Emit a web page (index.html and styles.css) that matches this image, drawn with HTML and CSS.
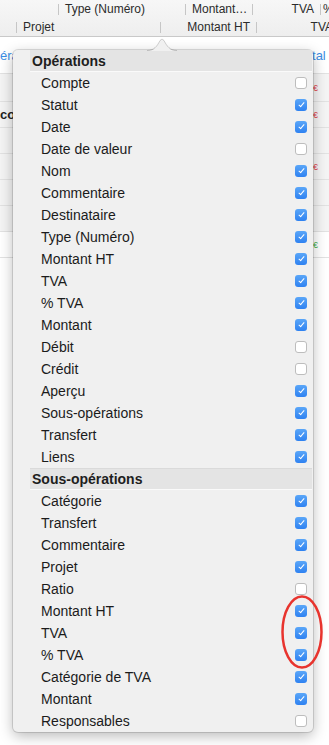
FILE: index.html
```html
<!DOCTYPE html>
<html lang="fr">
<head>
    <meta charset="UTF-8">
    <meta name="viewport" content="width=device-width, initial-scale=1.0">
    <title>Colonnes</title>
    <link rel="stylesheet" href="styles.css">
</head>
<body>
    <!-- Table behind the popover -->
    <div class="table-head">
        <div class="head-row">
            <div class="cell" style="width: 58px"></div>
            <span class="sep"></span>
            <div class="cell" style="width: 126px">Type (Numéro)</div>
            <span class="sep"></span>
            <div class="cell" style="width: 66px">Montant…</div>
            <span class="sep"></span>
            <div class="cell right" style="width: 67px">TVA</div>
            <span class="sep"></span>
            <div class="cell tight">%</div>
        </div>
        <div class="head-row">
            <div class="cell" style="width: 16px"></div>
            <span class="sep"></span>
            <div class="cell" style="width: 143px">Projet</div>
            <span class="sep"></span>
            <div class="cell right" style="width: 95px">Montant HT</div>
            <span class="sep"></span>
            <div class="cell right" style="width: 82px">TVA</div>
        </div>
    </div>

    <div class="summary">
        <span>éra</span>
        <span class="summary-right">tal :</span>
    </div>

    <div class="rows">
        <div class="row gray first"><span></span><span class="mark red">€</span></div>
        <div class="row gray"><span class="bold">co</span><span class="mark red">€</span></div>
        <div class="row gray"><span></span><span></span></div>
        <div class="row gray"><span></span><span class="mark red">€</span></div>
        <div class="row gray"><span></span><span></span></div>
        <div class="row gray"><span></span><span></span></div>
        <div class="row"><span></span><span class="mark green">€</span></div>
    </div>

    <!-- Column chooser popover -->
    <div class="popover">
        <svg class="arrow" width="30" height="13" viewBox="0 0 30 13">
            <path d="M0 13 C7 13 10 9 13 3 Q15 0 17 3 C20 9 23 13 30 13 Z" fill="#f0f0f0"/>
            <path d="M0 12.5 C7 12.5 10 8.5 13 2.5 Q15 -0.5 17 2.5 C20 8.5 23 12.5 30 12.5" fill="none" stroke="rgba(0,0,0,0.18)" stroke-width="1"/>
        </svg>

        <div class="group-title top">Opérations</div>
        <div class="item"><span>Compte</span><span class="box"></span></div>
        <div class="item"><span>Statut</span><span class="box on"></span></div>
        <div class="item"><span>Date</span><span class="box on"></span></div>
        <div class="item"><span>Date de valeur</span><span class="box"></span></div>
        <div class="item"><span>Nom</span><span class="box on"></span></div>
        <div class="item"><span>Commentaire</span><span class="box on"></span></div>
        <div class="item"><span>Destinataire</span><span class="box on"></span></div>
        <div class="item"><span>Type (Numéro)</span><span class="box on"></span></div>
        <div class="item"><span>Montant HT</span><span class="box on"></span></div>
        <div class="item"><span>TVA</span><span class="box on"></span></div>
        <div class="item"><span>% TVA</span><span class="box on"></span></div>
        <div class="item"><span>Montant</span><span class="box on"></span></div>
        <div class="item"><span>Débit</span><span class="box"></span></div>
        <div class="item"><span>Crédit</span><span class="box"></span></div>
        <div class="item"><span>Aperçu</span><span class="box on"></span></div>
        <div class="item"><span>Sous-opérations</span><span class="box on"></span></div>
        <div class="item"><span>Transfert</span><span class="box on"></span></div>
        <div class="item"><span>Liens</span><span class="box on"></span></div>

        <div class="group-title">Sous-opérations</div>
        <div class="item"><span>Catégorie</span><span class="box on"></span></div>
        <div class="item"><span>Transfert</span><span class="box on"></span></div>
        <div class="item"><span>Commentaire</span><span class="box on"></span></div>
        <div class="item"><span>Projet</span><span class="box on"></span></div>
        <div class="item"><span>Ratio</span><span class="box"></span></div>
        <div class="item"><span>Montant HT</span><span class="box on"></span></div>
        <div class="item"><span>TVA</span><span class="box on"></span></div>
        <div class="item"><span>% TVA</span><span class="box on"></span></div>
        <div class="item"><span>Catégorie de TVA</span><span class="box on"></span></div>
        <div class="item"><span>Montant</span><span class="box on"></span></div>
        <div class="item"><span>Responsables</span><span class="box"></span></div>
    </div>

    <!-- Red annotation circle -->
    <svg class="annotation" width="44" height="76" viewBox="0 0 44 76">
        <ellipse cx="22" cy="38" rx="19.5" ry="35.5" fill="none" stroke="#e8342e" stroke-width="2.5"/>
    </svg>
</body>
</html>
```

FILE: styles.css
```css
body {
    margin: 0;
    width: 329px;
    height: 745px;
    overflow: hidden;
    position: relative;
    background-color: #fff;
    font-family: "Liberation Sans", Arial, sans-serif;
}
.table-head {
    background: linear-gradient(#f7f7f7, #eeeeee);
    border-bottom: 1px solid #c9c9c9;
}
.head-row {
    display: flex;
    align-items: center;
    height: 18px;
    font-size: 12px;
    color: #2b2b2b;
    white-space: nowrap;
}
.cell {
    flex: none;
    box-sizing: border-box;
    padding: 0 6px;
    overflow: hidden;
}
.cell.right {
    text-align: right;
}
.cell.tight {
    padding: 0 2px;
}
.sep {
    flex: none;
    width: 1px;
    height: 11px;
    background-color: #c6c6c6;
}
.summary {
    display: flex;
    justify-content: space-between;
    align-items: center;
    height: 36px;
    font-size: 13px;
    color: #3b8de4;
    white-space: nowrap;
}
.summary-right {
    margin-right: -4px;
}
.row {
    display: flex;
    justify-content: space-between;
    align-items: center;
    height: 25px;
    border-bottom: 1px solid #e2e2e2;
    font-size: 13px;
    color: #222;
}
.row.first {
    height: 27px;
    border-top: 1px solid #e2e2e2;
}
.row.gray {
    background-color: #f4f4f4;
}
.bold {
    font-weight: bold;
}
.mark {
    font-size: 9px;
    margin-right: 11px;
}
.mark.red {
    color: #e0454a;
}
.mark.green {
    color: #3fb14a;
}
.popover {
    position: absolute;
    left: 13px;
    top: 50px;
    width: 300px;
    background-color: #f0f0f0;
    border-radius: 5px;
    box-shadow: 0 0 0 1px rgba(0, 0, 0, 0.12), 0 4px 14px rgba(0, 0, 0, 0.28);
}
.arrow {
    position: absolute;
    top: -12px;
    left: 134px;
}
.group-title {
    height: 20px;
    line-height: 20px;
    margin: 0 1px 0 17px;
    padding-left: 2px;
    background-color: #e4e4e4;
    border-top: 1px solid #dadada;
    border-bottom: 1px solid #fafafa;
    font-size: 14px;
    font-weight: bold;
    color: #1e1e1e;
}
.group-title.top {
    border-top-color: #e4e4e4;
}
.item {
    display: flex;
    justify-content: space-between;
    align-items: center;
    height: 22px;
    padding: 0 6px 0 28px;
    font-size: 14px;
    color: #1b1b1b;
}
.box {
    display: flex;
    justify-content: center;
    align-items: center;
    width: 12px;
    height: 12px;
    box-sizing: border-box;
    border-radius: 3px;
    background-color: #fff;
    border: 1px solid #bdbdbd;
}
.box.on {
    background: linear-gradient(#5aa6f8, #2f82f1);
    border: none;
}
.box.on::after {
    content: "";
    width: 2px;
    height: 5px;
    margin-top: -2px;
    border-right: 1.5px solid #fff;
    border-bottom: 1.5px solid #fff;
    transform: rotate(40deg);
}
.annotation {
    position: absolute;
    left: 280px;
    top: 594px;
}
```
